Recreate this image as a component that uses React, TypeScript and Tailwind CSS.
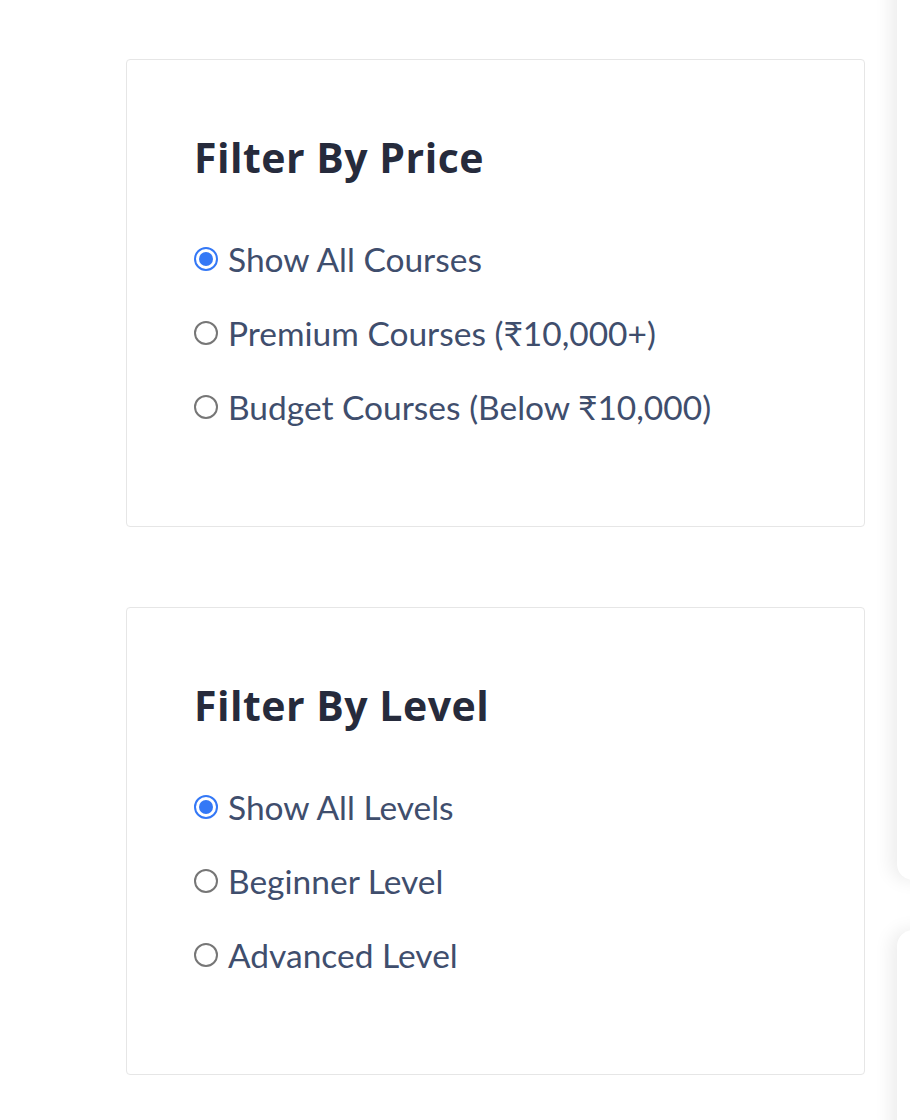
import { useState } from "react"

type Option = { value: string; label: string }

const priceOptions: Option[] = [
    { value: "all", label: "Show All Courses" },
    { value: "premium", label: "Premium Courses (₹10,000+)" },
    { value: "budget", label: "Budget Courses (Below ₹10,000)" },
]

const levelOptions: Option[] = [
    { value: "all", label: "Show All Levels" },
    { value: "beginner", label: "Beginner Level" },
    { value: "advanced", label: "Advanced Level" },
]

const Radio = ({ checked }: { checked: boolean }) =>
    checked ? (
        <span className="flex h-[24px] w-[24px] shrink-0 items-center justify-center rounded-full border-[2px] border-[#3478f6] bg-white">
            <span className="h-[14px] w-[14px] rounded-full bg-[#3478f6]" />
        </span>
    ) : (
        <span className="h-[24px] w-[24px] shrink-0 rounded-full border-[2px] border-[#767676] bg-white" />
    )

const FilterCard = ({
    title,
    options,
    selected,
    onSelect,
}: {
    title: string
    options: Option[]
    selected: string
    onSelect: (value: string) => void
}) => (
    <section className="rounded-[4px] border border-[#e6e6e6] bg-white pl-[67px] pt-[73px] pb-[101px]">
        <h2 className="font-['Open_Sans',sans-serif] text-[41px] font-bold leading-[48px] tracking-[0.5px] text-[#262b3c]">{title}</h2>
        <div className="mt-[60px] flex flex-col gap-[38px]">
            {options.map((option) => (
                <label
                    key={option.value}
                    className="flex cursor-pointer items-center gap-[10px] font-['Lato',sans-serif] text-[33.5px] leading-[36px] text-[#3f4e6d]"
                    onClick={() => onSelect(option.value)}
                >
                    <Radio checked={selected === option.value} />
                    {option.label}
                </label>
            ))}
        </div>
    </section>
)

export default function App() {
    const [price, setPrice] = useState("all")
    const [level, setLevel] = useState("all")

    return (
        <div className="flex h-[1120px] w-[910px] overflow-hidden bg-white">
            <div className="ml-[126px] mt-[59px] flex w-[739px] shrink-0 flex-col gap-[80px]">
                <FilterCard title="Filter By Price" options={priceOptions} selected={price} onSelect={setPrice} />
                <FilterCard title="Filter By Level" options={levelOptions} selected={level} onSelect={setLevel} />
            </div>
            <div className="ml-[32px] flex w-[300px] shrink-0 flex-col gap-[50px]">
                <div className="-mt-[40px] h-[920px] shrink-0 rounded-[16px] bg-white shadow-[-6px_0_18px_rgba(0,0,0,0.08)]" />
                <div className="h-[300px] shrink-0 rounded-[16px] bg-white shadow-[-6px_0_18px_rgba(0,0,0,0.08)]" />
            </div>
        </div>
    )
}
